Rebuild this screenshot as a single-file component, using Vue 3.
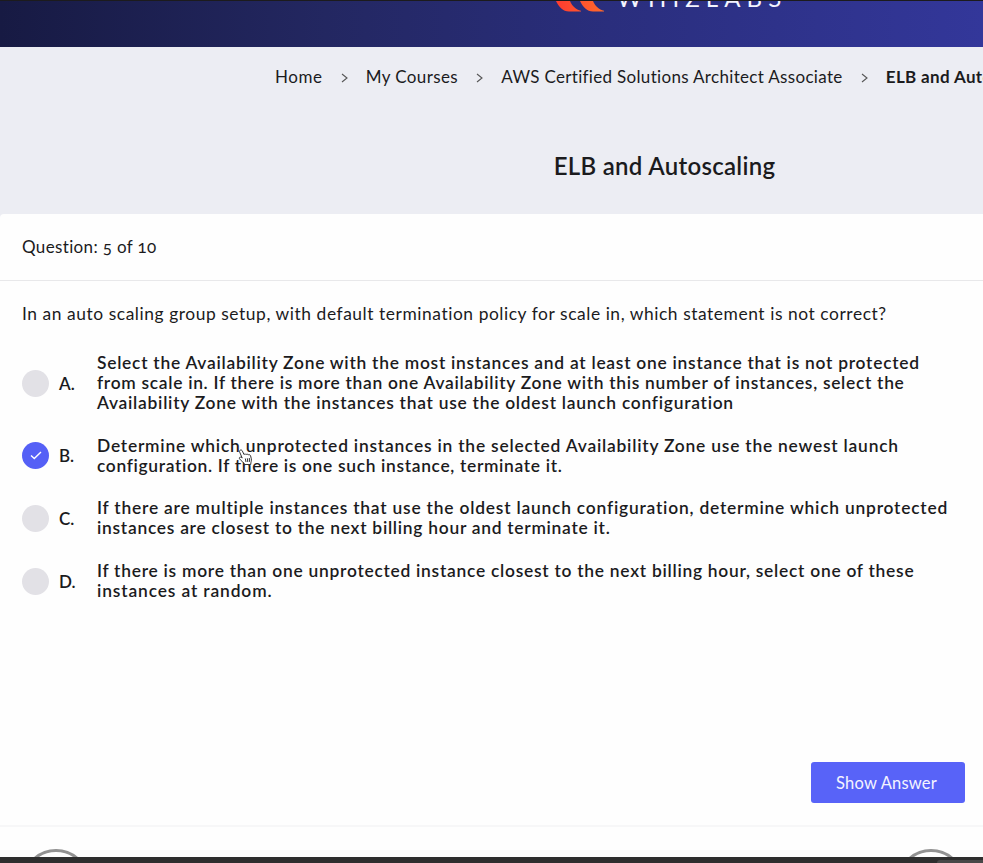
<script setup>
const crumbs = [
  { text: 'Home', space: 0.55 },
  { text: 'My Courses', space: 0.4 },
  { text: 'AWS Certified Solutions Architect Associate', space: 0.32 },
]
const options = [
  {
    letter: 'A',
    lines: [
      { text: 'Select the Availability Zone with the most instances and at least one instance that is not protected', space: 0.74 },
      { text: 'from scale in. If there is more than one Availability Zone with this number of instances, select the', space: 0.7 },
      { text: 'Availability Zone with the instances that use the oldest launch configuration', space: 0.74 },
    ],
  },
  {
    letter: 'B',
    checked: true,
    lines: [
      { text: 'Determine which unprotected instances in the selected Availability Zone use the newest launch', space: 0.78 },
      { text: 'configuration. If there is one such instance, terminate it.', space: 0.67 },
    ],
  },
  {
    letter: 'C',
    lines: [
      { text: 'If there are multiple instances that use the oldest launch configuration, determine which unprotected', space: 0.79 },
      { text: 'instances are closest to the next billing hour and terminate it.', space: 0.73 },
    ],
  },
  {
    letter: 'D',
    lines: [
      { text: 'If there is more than one unprotected instance closest to the next billing hour, select one of these', space: 0.735 },
      { text: 'instances at random.', space: 0.86 },
    ],
  },
]
</script>

<template>
  <div class="page">
    <header class="topbar">
      <svg class="mark" width="52" height="12" viewBox="0 0 52 12">
        <defs>
          <linearGradient id="flame" x1="0" x2="1">
            <stop offset="0" stop-color="#ff3b30" />
            <stop offset="1" stop-color="#ff6a2b" />
          </linearGradient>
        </defs>
        <path d="M0 0H14C16 5 20 8.500 25 9.700V10.500H13C7 10.500 3 6 0 0Z M24 0H37C39 5 43 8.500 48 9.700V10.500H37C31 10.500 27 6 24 0Z" fill="url(#flame)" />
      </svg>
      <span class="brand">WHIZLABS</span>
    </header>

    <section class="hero">
      <nav class="crumbs">
        <template v-for="c in crumbs" :key="c.text">
          <a class="crumb" :style="{ letterSpacing: c.space + 'px' }">{{ c.text }}</a>
          <svg class="chev" width="7" height="10" viewBox="0 0 7 10"><path d="M1 1L6 5L1 9" /></svg>
        </template>
        <b class="current">ELB and Autoscaling</b>
      </nav>
      <h1>ELB and Autoscaling</h1>
    </section>

    <main class="card">
      <div class="count">Question: 5 of 10</div>
      <p class="question">In an auto scaling group setup, with default termination policy for scale in, which statement is not correct?</p>
      <ul class="options">
        <li v-for="o in options" :key="o.letter" class="option">
          <span class="radio" :class="{ on: o.checked }">
            <svg v-if="o.checked" width="12" height="9" viewBox="0 0 12 9"><path d="M1 4.500L4.300 7.600L11 1" /></svg>
          </span>
          <span class="letter">{{ o.letter }}.</span>
          <div class="answer">
            <div v-for="l in o.lines" :key="l.text"><span :style="{ letterSpacing: l.space + 'px' }">{{ l.text }}</span></div>
          </div>
        </li>
      </ul>
      <div class="actions"><button class="show">Show Answer</button></div>
    </main>

    <footer class="pager">
      <span class="round"></span>
      <span class="round"></span>
    </footer>
    <div class="dock"><span></span></div>

    <svg class="hand" width="15" height="17" viewBox="0 0 15 17">
      <path d="M2.200 1.200C3.200 .6 4 1.200 4.400 2.100L6 5.600C6.600 4.800 7.700 4.900 8.100 5.600C8.800 4.900 9.900 5.100 10.200 5.900C11.100 5.300 12.300 5.800 12.600 6.900L13.300 9.800C13.700 11.800 12.800 13 12.700 15.500H6.900C6.300 13.800 3.400 12.300 1.600 9.900C.7 8.600 2 7.500 3.600 8.600L4.200 9L1.700 3.200C1.300 2.300 1.500 1.600 2.200 1.200Z" />
      <path class="knuckle" d="M7.300 9.500L8 13M9.300 9.300L9.800 13M11.300 9L11.500 12.800" />
    </svg>
  </div>
</template>

<style>
body { margin: 0; overflow: hidden; }
</style>

<style scoped>
.page {
  position: relative;
  display: flex;
  flex-direction: column;
  width: 983px;
  height: 863px;
  overflow: hidden;
  background: #ecedf3;
  color: #1b1b1d;
  font-family: Lato, "Open Sans", sans-serif;
  font-size: 17px;
}
.topbar {
  box-sizing: border-box;
  display: flex;
  flex: none;
  height: 47px;
  padding-left: 556px;
  overflow: hidden;
  border-top: 1px solid #1c1b1d;
  background: linear-gradient(90deg, #171a43 0%, #232761 33%, #2a2e7d 62%, #33379a 100%);
}
.mark { flex: none; }
.brand {
  margin: -15px 0 0 9px;
  color: #f4f4ff;
  font-size: 24px;
  line-height: 24px;
  font-weight: 400;
  letter-spacing: 6.1px;
}
.hero {
  flex: none;
  height: 167px;
  background: #ecedf3;
}
.crumbs {
  display: flex;
  align-items: center;
  height: 58px;
  padding-left: 275px;
  white-space: nowrap;
}
.chev { flex: none; margin: 4px 18.2px 0 18px; }
.chev path { fill: none; stroke: #555; stroke-width: 1.1; }
.current { letter-spacing: 0.35px; }
h1 {
  margin: 45px 0 0 346px;
  width: 637px;
  text-align: center;
  font-size: 24px;
  line-height: 32px;
  font-weight: 600;
  letter-spacing: 0.3px;
}
.card {
  display: flex;
  flex-direction: column;
  flex: none;
  box-sizing: border-box;
  height: 613px;
  border-bottom: 2px solid #f7f7f8;
  border-top-left-radius: 4px;
  background: #fefefe;
}
.count {
  flex: none;
  height: 66px;
  padding-left: 22px;
  border-bottom: 1px solid #e8e8ea;
  line-height: 66px;
  letter-spacing: 0.35px;
  font-variant-numeric: oldstyle-nums;
}
.question {
  margin: 22px 0 0 22px;
  font-size: 17.4px;
  line-height: 22px;
  letter-spacing: 0.56px;
  white-space: nowrap;
}
.options {
  display: flex;
  flex-direction: column;
  gap: 22.7px;
  margin: 28.1px 0 0;
  padding: 0 0 0 22px;
  list-style: none;
  font-weight: 600;
}
.option { display: flex; align-items: center; }
.radio {
  display: flex;
  align-items: center;
  justify-content: center;
  flex: none;
  width: 27px;
  height: 27px;
  border-radius: 50%;
  background: #e2e1e6;
}
.radio.on { background: #5560f6; }
.radio path { fill: none; stroke: #fff; stroke-width: 1.4; }
.letter { width: 38px; margin-left: 10px; }
.answer { font-size: 17.4px; line-height: 20px; white-space: nowrap; }
.actions {
  display: flex;
  justify-content: flex-end;
  margin-top: auto;
  padding: 0 18px 22px 0;
}
.show {
  width: 154px;
  height: 41px;
  padding: 0 3px 0 0;
  border: 0;
  border-radius: 3px;
  background: #5863f8;
  color: #f4f4ff;
  font: inherit;
  font-size: 16.5px;
  letter-spacing: 0.2px;
}
.pager {
  display: flex;
  justify-content: space-between;
  flex: none;
  box-sizing: border-box;
  height: 30px;
  padding: 22px 18px 0 22px;
  overflow: hidden;
  background: #fefefe;
}
.round {
  box-sizing: border-box;
  width: 68px;
  height: 68px;
  border: 3px solid #929292;
  border-radius: 50%;
}
.dock {
  display: flex;
  align-items: flex-end;
  justify-content: flex-end;
  flex: none;
  height: 6px;
  background: #2e2e2e;
}
.dock span {
  width: 46px;
  height: 3px;
  border-top-left-radius: 3px;
  background: #484848;
}
.hand {
  position: absolute;
  left: 238px;
  top: 449px;
}
.hand path { fill: #fff; stroke: #333; stroke-width: 1; }
.hand .knuckle { fill: none; }
</style>
